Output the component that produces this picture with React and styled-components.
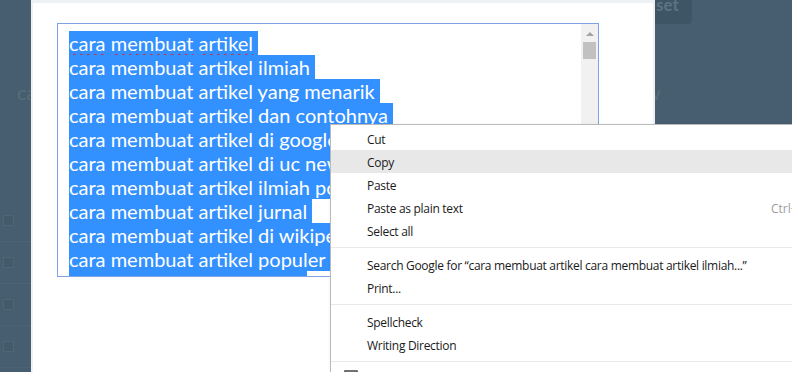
import React from "react";
import styled, { createGlobalStyle } from "styled-components";

const GlobalStyle = createGlobalStyle`
  html, body {
    margin: 0;
    padding: 0;
    background: #465e6f;
  }
  * {
    box-sizing: border-box;
  }
`;

const lines = [
  "cara membuat artikel",
  "cara membuat artikel ilmiah",
  "cara membuat artikel yang menarik",
  "cara membuat artikel dan contohnya",
  "cara membuat artikel di google",
  "cara membuat artikel di uc news",
  "cara membuat artikel ilmiah populer",
  "cara membuat artikel jurnal",
  "cara membuat artikel di wikipedia",
  "cara membuat artikel populer",
  "cara membuat artikel opini",
];

const menu = [
  { label: "Cut" },
  { label: "Copy", active: true },
  { label: "Paste" },
  { label: "Paste as plain text", shortcut: "Ctrl+Shift+V" },
  { label: "Select all" },
  { sep: true },
  {
    label:
      "Search Google for \u201Ccara membuat artikel cara membuat artikel ilmiah...\u201D",
  },
  { label: "Print..." },
  { sep: true },
  { label: "Spellcheck" },
  { label: "Writing Direction" },
  { sep: true },
  { label: "Inspect", icon: true },
];

function App() {
  return (
    <Screen>
      <GlobalStyle />
      {/* page behind the overlay */}
      <LeftStrip>
        <GhostText>cara</GhostText>
        <GhostList>
          {[0, 1, 2, 3].map((i) => (
            <GhostRow key={i}>
              <GhostBox />
            </GhostRow>
          ))}
        </GhostList>
      </LeftStrip>

      <Modal>
        <TextBox>
          <TextContent>
            {lines.map((line, i) => (
              <Line key={i}>
                <Selected>
                  {i === 0
                    ? line.split(" ").map((w, j) => (
                        <React.Fragment key={j}>
                          {j > 0 && " "}
                          <Squiggle>{w}</Squiggle>
                        </React.Fragment>
                      ))
                    : line}
                  {"\u00a0"}
                </Selected>
              </Line>
            ))}
          </TextContent>
          <ScrollBar>
            <ArrowUp />
            <Thumb />
          </ScrollBar>
        </TextBox>
      </Modal>

      <RightSide>
        <ResetButton>set</ResetButton>
        <GhostText $right>w</GhostText>
      </RightSide>

      <ContextMenu>
        {menu.map((item, i) =>
          item.sep ? (
            <Separator key={i} />
          ) : (
            <MenuItem key={i} $active={item.active}>
              {item.icon && (
                <ItemIcon viewBox="0 0 14 14">
                  <rect x="1" y="1" width="12" height="12" fill="none" stroke="#444" strokeWidth="1.5" />
                </ItemIcon>
              )}
              <ItemLabel>{item.label}</ItemLabel>
              {item.shortcut && <Shortcut>{item.shortcut}</Shortcut>}
            </MenuItem>
          )
        )}
      </ContextMenu>
    </Screen>
  );
}

const Screen = styled.div`
  position: relative;
  display: flex;
  width: 792px;
  height: 372px;
  overflow: hidden;
  background: #465e6f;
`;

const LeftStrip = styled.div`
  width: 31px;
  flex: none;
  padding-top: 80px;
  overflow: hidden;
`;

const GhostText = styled.div`
  font-family: Lato, "Liberation Sans", sans-serif;
  font-size: 20px;
  line-height: 24px;
  color: #5a6c78;
  white-space: nowrap;
  margin-left: ${(p) => (p.$right ? "-10px" : "17px")};
  margin-top: ${(p) => (p.$right ? "56px" : "0")};
`;

const GhostList = styled.div`
  margin-top: 96px;
  display: flex;
  flex-direction: column;
`;

const GhostRow = styled.div`
  height: 42px;
  display: flex;
  align-items: center;
  padding-left: 3px;
  border-bottom: 1px solid #4b6373;
`;

const GhostBox = styled.div`
  width: 11px;
  height: 11px;
  background: #425a69;
  border: 1px solid #4d6575;
`;

const Modal = styled.div`
  width: 624px;
  flex: none;
  background: #fff;
  border-left: 2px solid #eef1f3;
  border-right: 2px solid #eef1f3;
  border-top: 3px solid #edf1f3;
  padding: 20px 0 0 24px;
`;

const TextBox = styled.div`
  display: flex;
  width: 542px;
  height: 254px;
  border: 1px solid #7ea2e6;
  background: #fff;
`;

const TextContent = styled.div`
  flex: 1;
  overflow: hidden;
  padding: 7px 0 0 11px;
  font-family: Lato, "Liberation Sans", sans-serif;
  font-size: 20px;
  line-height: 24px;
  color: #222;
`;

const Line = styled.div`
  white-space: pre;
  height: 24px;
`;

const Selected = styled.span`
  background: #3390ff;
  color: #fff;
`;

const Squiggle = styled.span`
  text-decoration: underline wavy #e0202a;
  text-decoration-thickness: 1px;
  text-underline-offset: 2px;
  text-decoration-skip-ink: none;
`;

const ScrollBar = styled.div`
  width: 17px;
  flex: none;
  background: #f1f1f1;
  display: flex;
  flex-direction: column;
  align-items: center;
  padding-top: 8px;
`;

const ArrowUp = styled.div`
  width: 0;
  height: 0;
  border-left: 4px solid transparent;
  border-right: 4px solid transparent;
  border-bottom: 4px solid #a3a3a3;
`;

const Thumb = styled.div`
  width: 13px;
  height: 17px;
  margin-top: 6px;
  background: #c1c1c1;
`;

const RightSide = styled.div`
  flex: 1;
  overflow: hidden;
`;

const ResetButton = styled.div`
  width: 37px;
  height: 24px;
  background: #3e5565;
  border-bottom-right-radius: 4px;
  font-family: Lato, "Liberation Sans", sans-serif;
  font-weight: bold;
  font-size: 17px;
  line-height: 10px;
  color: #5c7483;
  overflow: hidden;
  padding-left: 1px;
`;

const ContextMenu = styled.div`
  position: absolute;
  left: 330px;
  top: 124px;
  width: 480px;
  background: #fff;
  border: 1px solid #bababa;
  padding: 2px 0;
  font-family: "Open Sans", "Noto Sans", sans-serif;
  font-size: 12px;
  color: #1a1a1a;
  box-shadow: 2px 2px 4px rgba(0, 0, 0, 0.2);
`;

const MenuItem = styled.div`
  position: relative;
  display: flex;
  align-items: center;
  height: 23px;
  padding: 2px 0 0 36px;
  background: ${(p) => (p.$active ? "#e8e8e8" : "transparent")};
`;

const ItemLabel = styled.span`
  flex: 0 0 404px;
  white-space: nowrap;
  letter-spacing: -0.3px;
`;

const Shortcut = styled.span`
  color: #9c9c9c;
  white-space: nowrap;
`;

const ItemIcon = styled.svg`
  position: absolute;
  left: 13px;
  top: 3px;
  width: 14px;
  height: 14px;
`;

const Separator = styled.div`
  height: 1px;
  margin: 5px 0;
  background: #e9e9e9;
`;

export default App;
